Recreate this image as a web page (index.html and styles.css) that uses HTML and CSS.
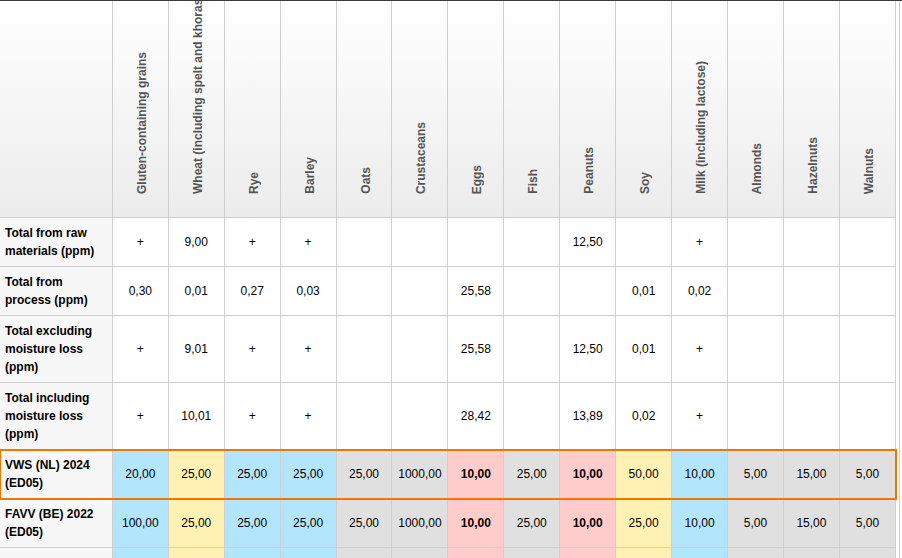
FILE: index.html
```html
<!DOCTYPE html>
<html>
<head>
<meta charset="utf-8">
<link rel="stylesheet" href="styles.css">
</head>
<body>
<div class="page">
  <div class="frame">
    <table class="grid">
      <thead>
        <tr>
          <th class="corner"></th>
          <th><div class="vt">Gluten-containing grains</div></th>
          <th><div class="vt">Wheat (including spelt and khorasan)</div></th>
          <th><div class="vt">Rye</div></th>
          <th><div class="vt">Barley</div></th>
          <th><div class="vt">Oats</div></th>
          <th><div class="vt">Crustaceans</div></th>
          <th><div class="vt">Eggs</div></th>
          <th><div class="vt">Fish</div></th>
          <th><div class="vt">Peanuts</div></th>
          <th><div class="vt">Soy</div></th>
          <th><div class="vt">Milk (including lactose)</div></th>
          <th><div class="vt">Almonds</div></th>
          <th><div class="vt">Hazelnuts</div></th>
          <th><div class="vt">Walnuts</div></th>
        </tr>
      </thead>
      <tbody>
        <tr>
          <td class="label">Total from raw materials (ppm)</td>
          <td>+</td><td>9,00</td><td>+</td><td>+</td><td></td><td></td><td></td><td></td><td>12,50</td><td></td><td>+</td><td></td><td></td><td></td>
        </tr>
        <tr>
          <td class="label">Total from process (ppm)</td>
          <td>0,30</td><td>0,01</td><td>0,27</td><td>0,03</td><td></td><td></td><td>25,58</td><td></td><td></td><td>0,01</td><td>0,02</td><td></td><td></td><td></td>
        </tr>
        <tr>
          <td class="label">Total excluding moisture loss (ppm)</td>
          <td>+</td><td>9,01</td><td>+</td><td>+</td><td></td><td></td><td>25,58</td><td></td><td>12,50</td><td>0,01</td><td>+</td><td></td><td></td><td></td>
        </tr>
        <tr>
          <td class="label">Total including moisture loss (ppm)</td>
          <td>+</td><td>10,01</td><td>+</td><td>+</td><td></td><td></td><td>28,42</td><td></td><td>13,89</td><td>0,02</td><td>+</td><td></td><td></td><td></td>
        </tr>
        <tr class="ref selected">
          <td class="label">VWS (NL) 2024 (ED05)</td>
          <td class="b">20,00</td><td class="y">25,00</td><td class="b">25,00</td><td class="b">25,00</td><td class="g">25,00</td><td class="g">1000,00</td><td class="p">10,00</td><td class="g">25,00</td><td class="p">10,00</td><td class="y">50,00</td><td class="b">10,00</td><td class="g">5,00</td><td class="g">15,00</td><td class="g">5,00</td>
        </tr>
        <tr class="ref">
          <td class="label">FAVV (BE) 2022 (ED05)</td>
          <td class="b">100,00</td><td class="y">25,00</td><td class="b">25,00</td><td class="b">25,00</td><td class="g">25,00</td><td class="g">1000,00</td><td class="p">10,00</td><td class="g">25,00</td><td class="p">10,00</td><td class="y">25,00</td><td class="b">10,00</td><td class="g">5,00</td><td class="g">15,00</td><td class="g">5,00</td>
        </tr>
        <tr class="ref">
          <td class="label"></td>
          <td class="b"></td><td class="y"></td><td class="b"></td><td class="b"></td><td class="g"></td><td class="g"></td><td class="p"></td><td class="g"></td><td class="p"></td><td class="y"></td><td class="b"></td><td class="g"></td><td class="g"></td><td class="g"></td>
        </tr>
      </tbody>
    </table>
  </div>
</div>
</body>
</html>
```
FILE: styles.css
```css
html, body {
  margin: 0;
  padding: 0;
  background: #ffffff;
}

.page {
  border-top: 1px solid #3a3a3a;
  width: 902px;
  height: 557px;
  overflow: hidden;
  font-family: "Liberation Sans", Arial, sans-serif;
  font-size: 12px;
  color: #000;
}

.frame {
  width: 899px;
  border-right: 1px solid #cfcfcf;
  height: 100%;
}

.grid {
  border-collapse: separate;
  border-spacing: 0;
  table-layout: fixed;
  width: 896px;
}

.grid th,
.grid td {
  border-right: 1px solid #cfcfcf;
  border-bottom: 1px solid #cfcfcf;
  padding: 0;
}

.grid th {
  height: 216px;
  width: 55px;
  vertical-align: bottom;
  padding-bottom: 23px;
  background: linear-gradient(#ffffff, #ececec);
  color: #555555;
  font-weight: bold;
  box-sizing: border-box;
}

.grid th.corner {
  width: 111px;
}

.vt {
  writing-mode: vertical-rl;
  transform: rotate(180deg);
  white-space: nowrap;
  max-height: 193px;
  overflow: hidden;
  margin: 0 auto;
  width: fit-content;
  line-height: 14px;
  padding-right: 3px;
}

.grid td {
  height: 36px;
  padding: 6px 0;
  line-height: 18px;
  text-align: center;
  vertical-align: middle;
  background: #ffffff;
}

.grid td.label {
  text-align: left;
  padding-left: 5px;
  padding-right: 4px;
  font-weight: bold;
  background: #f7f7f7;
}

.grid td.b { background: #b3e5fc; }
.grid td.y { background: #fff0b4; }
.grid td.g { background: #e0e0e0; }
.grid td.p { background: #ffcccc; font-weight: bold; }

.grid tr.selected {
  outline: 2px solid #ee7700;
  outline-offset: -1px;
}
```
